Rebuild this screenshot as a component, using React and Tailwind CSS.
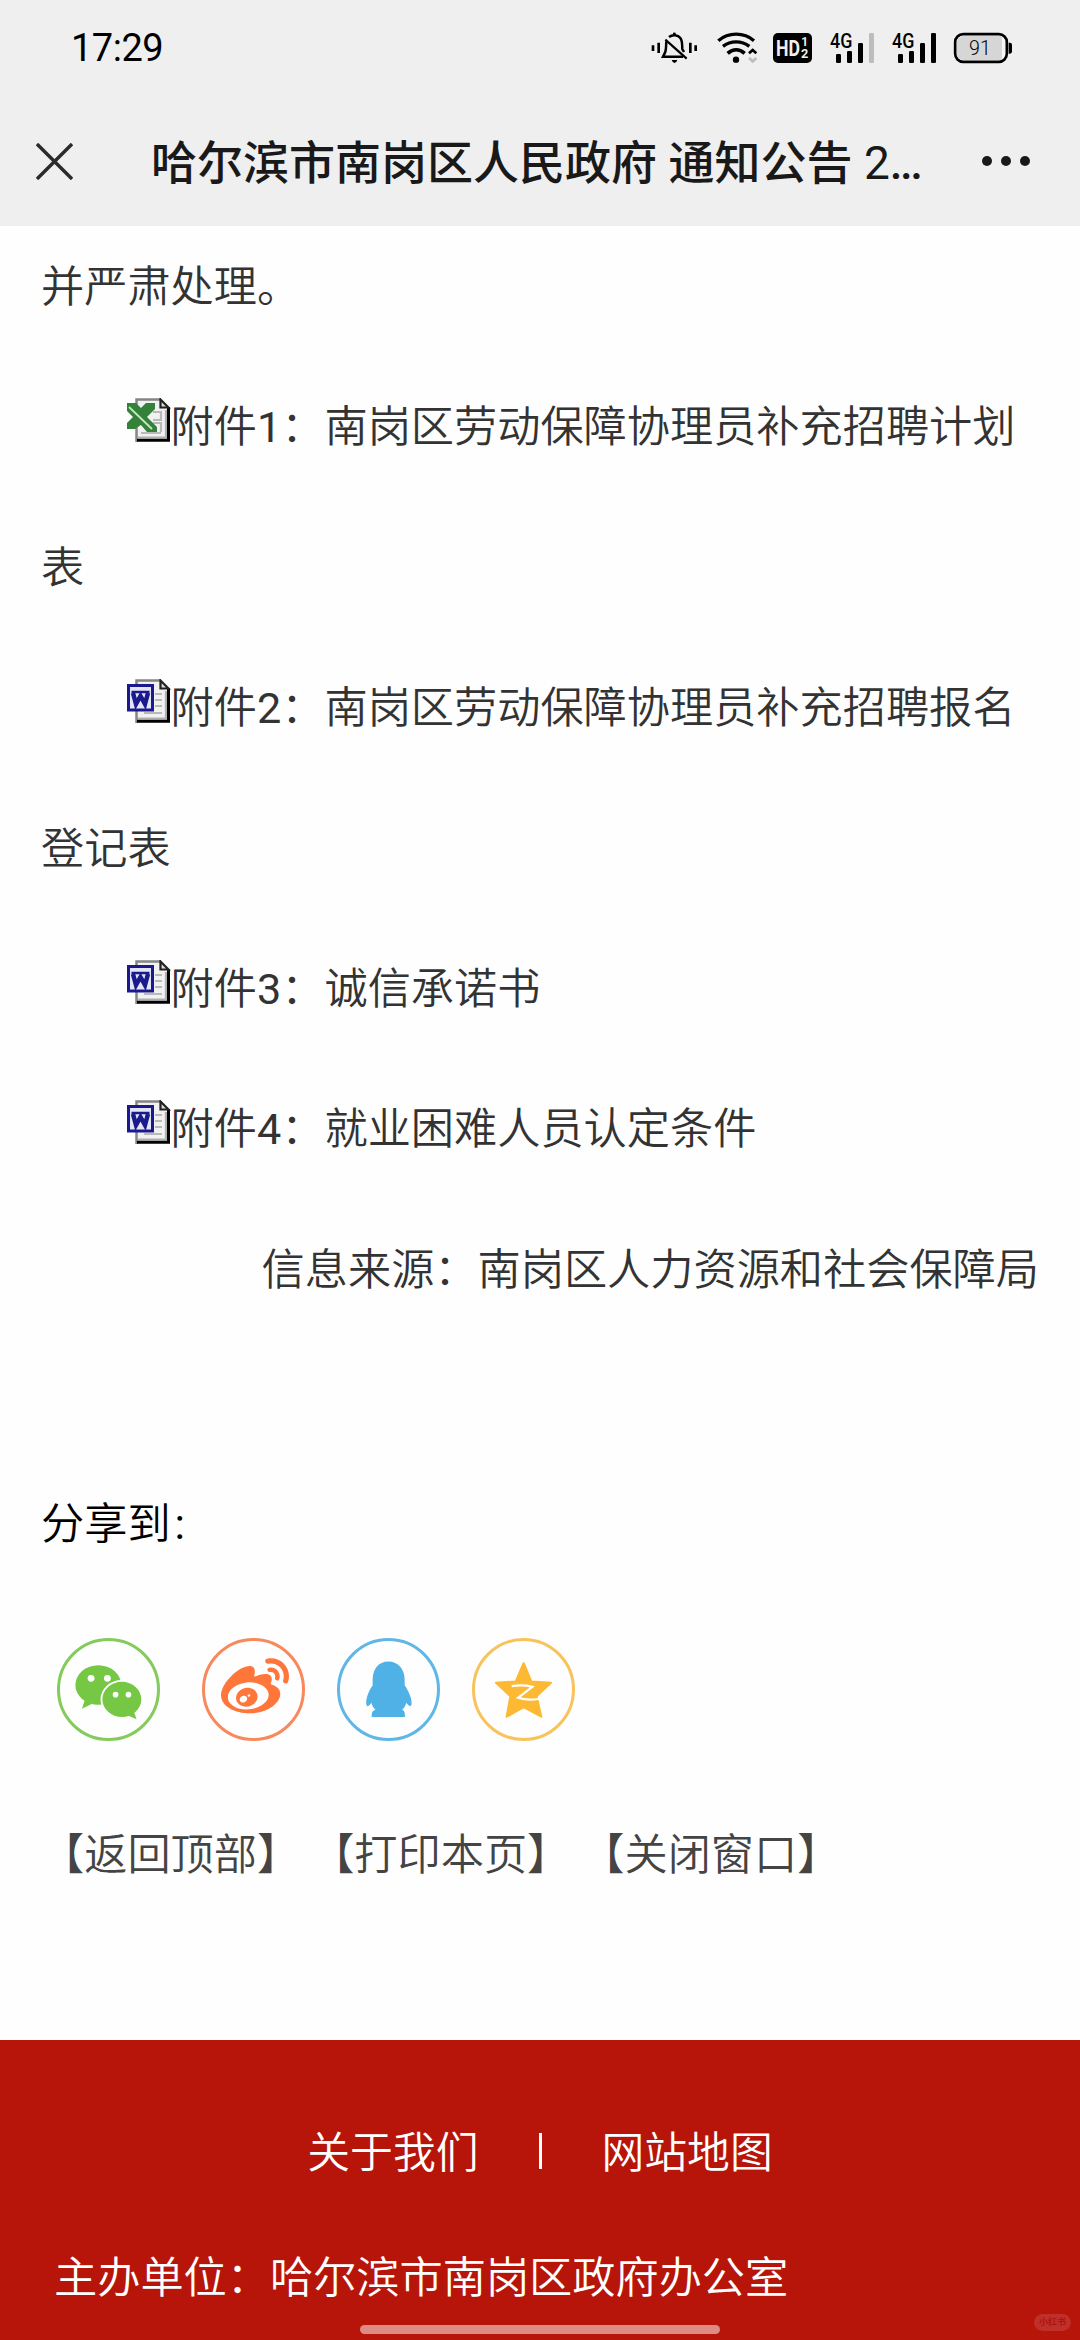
import React from "react";
import { FaWeibo } from "react-icons/fa";

const attachments = [
  { type: "excel", title: "南岗区劳动保障协理员补充招聘计划表" },
  { type: "word", title: "南岗区劳动保障协理员补充招聘报名登记表" },
  { type: "word", title: "诚信承诺书" },
  { type: "word", title: "就业困难人员认定条件" },
];

function MuteIcon() {
  return (
    <svg className="w-[47px] h-8" viewBox="30 96 141 96" fill="none" stroke="#000">
      <path d="M36 136v17M53 128v31M148 128v31M164 136v17" strokeWidth="8" />
      <path d="M84 111c10-8 27-7 34 3 7 9 5 24 6 33l5 9M76 124c-1 12 0 25-4 34l-6 12h60" strokeWidth="7.500" />
      <path d="M73 119l64 57" strokeWidth="6.500" />
      <path d="M100 98v8" strokeWidth="8" />
      <path d="M92 180h17q-3 9-8.500 9t-8.500-9z" fill="#000" stroke="none" />
    </svg>
  );
}

function WifiIcon() {
  return (
    <svg className="w-[41px] h-8" viewBox="228 96 123 96" fill="none" stroke="#000">
      <path d="M232 122c30-26 77-26 107 0" strokeWidth="10" />
      <path d="M246 139c23-18 56-18 79 0" strokeWidth="10" />
      <path d="M260 160c16-14 35-14 51 0" strokeWidth="11" />
      <circle cx="285" cy="179" r="9.500" fill="#000" stroke="none" />
      <path d="M324 160l11-10 11 10" strokeWidth="8" />
      <path d="M324 174l11 10 11-10" stroke="#bdbdbd" strokeWidth="8" />
    </svg>
  );
}

function HdIcon() {
  return (
    <svg className="w-[41px] h-8" viewBox="393 96 123 96" fontFamily="Roboto, sans-serif" fontWeight="700" fill="#efefef">
      <rect x="396" y="99" width="117" height="90" rx="15" fill="#000" />
      <text x="405" y="167" fontSize="64" textLength="72" lengthAdjust="spacingAndGlyphs">HD</text>
      <text x="481" y="139" fontSize="36">1</text>
      <text x="480" y="175" fontSize="38">2</text>
    </svg>
  );
}

function SignalIcon({ weak }) {
  return (
    <svg className="w-[48px] h-10 -mt-2 overflow-visible" viewBox="564 72 144 120">
      <text x="567" y="143" fontSize="58" fontFamily="Roboto, sans-serif" fontWeight="500" textLength="67" lengthAdjust="spacingAndGlyphs">
        4G
      </text>
      <rect x="585" y="162" width="15" height="27" rx="4" />
      <rect x="618" y="153" width="15" height="36" rx="4" />
      <rect x="651" y="129" width="15" height="60" rx="4" />
      <rect x="684" y="99" width="15" height="90" rx="4" fill={weak ? "#bdbdbd" : "#000"} />
    </svg>
  );
}

function BatteryIcon() {
  return (
    <svg className="w-[60px] h-8" viewBox="936 96 180 96">
      <rect x="942.500" y="102.500" width="155" height="83" rx="24" fill="#f6f6f6" stroke="#000" strokeWidth="8" />
      <path d="M968 108h115v72h-115q-20 0-20-20v-32q0-20 20-20z" fill="#d6d6d6" />
      <path d="M1103 128h4q6 0 6 7v19q0 7-6 7h-4z" />
      <text x="984" y="164" fontSize="59" fontFamily="Roboto, sans-serif" fontWeight="300">
        91
      </text>
    </svg>
  );
}

function Sheet() {
  return (
    <>
      <path d="M9 1h24l9 9v33H9z" fill="#f1f1f1" />
      <path d="M9.500 44V1.500H34" fill="none" stroke="#858585" strokeWidth="2.500" />
      <path d="M11 39.500h28V12" fill="none" stroke="#b0b0b0" strokeWidth="2.200" />
      <path d="M10 42.300h31.500V9" fill="none" stroke="#000" strokeWidth="3" />
      <path d="M33.500 1.500l8 8h-8z" fill="#ddd" stroke="#222" strokeWidth="2.200" />
    </>
  );
}

function FileIcon({ type }) {
  return (
    <svg className="inline-block align-baseline w-[43.200px] h-[44px]" viewBox="0 0 43.200 44">
      <Sheet />
      {type === "excel" ? (
        <>
          <path d="M26 14h8v8h-8M26 25h8v9M14 35h20" fill="none" stroke="#b9b9b9" strokeWidth="2.200" />
          <path d="M0 5h9l5 5 5-5h9v6l-8 8 10 10v5h-10l-6-7-6 4H0v-6l6-6-6-6z" fill="#34813a" />
          <path d="M2 9l23 22" stroke="#c5e6c0" strokeWidth="1.800" />
        </>
      ) : (
        <>
          <path d="M28 15h7M28 21h7M28 27h7M17 34h18" stroke="#b9b9b9" strokeWidth="1.800" />
          <rect x="1.500" y="6.500" width="24" height="24.500" fill="#e4e4f6" stroke="#1a1a8c" strokeWidth="3" />
          <path d="M4.500 13h18" stroke="#1a1a8c" strokeWidth="2.500" />
          <path d="M6 14l3 11 4.500-8 4.500 8 3-11" fill="none" stroke="#1a1a8c" strokeWidth="4.500" />
        </>
      )}
    </svg>
  );
}

function WechatIcon() {
  return (
    <svg className="w-full h-full" viewBox="80 475 309 309">
      <path d="M160 660l-10 31 31-15z" fill="#75c744" />
      <ellipse cx="202" cy="615" rx="73" ry="63" fill="#75c744" />
      <ellipse cx="277" cy="661" rx="68" ry="62" fill="#fff" />
      <path d="M297 712l27 12-12-34z" fill="#75c744" />
      <ellipse cx="277" cy="661" rx="62" ry="56" fill="#75c744" />
      <g fill="#fff">
        <circle cx="179" cy="594" r="11" />
        <circle cx="231" cy="594" r="11" />
        <circle cx="257" cy="646" r="9" />
        <circle cx="298" cy="646" r="9" />
      </g>
    </svg>
  );
}

function QqIcon() {
  return (
    <svg className="w-full h-full" viewBox="52 55 309 309" fill="#4fb1e6">
      <path d="M206 120c32 0 52 26 52 58v18c10 14 24 42 22 60-2 12-10 5-17-4-3 11-6 16-13 22 7 3 9 8 9 23H153c0-14 2-20 12-23-7-6-10-12-13-22-6 9-13 16-16 5-3-17 9-46 20-60v-19c0-32 18-58 50-58z" />
    </svg>
  );
}

function QzoneIcon() {
  return (
    <svg className="w-full h-full" viewBox="457 55 309 309">
      <path
        d="M612 126l24 58 63 4-46 43 15 65-56-31-54 31 12-65-46-43 63-4z"
        fill="#fdb933"
        stroke="#fdb933"
        strokeWidth="7"
        strokeLinejoin="round"
      />
      <path d="M574 199q35-6 66 2l-46 35q32 10 68 3" fill="none" stroke="#fff" strokeWidth="7" />
    </svg>
  );
}

function ShareButton({ className, children }) {
  return (
    <button
      className={`flex items-center justify-center size-[103px] shrink-0 rounded-full border-3 *:shrink-0 ${className}`}
    >
      {children}
    </button>
  );
}

function App() {
  return (
    <div className="relative flex flex-col w-[1080px] h-[2340px] overflow-hidden bg-[#fefefe] font-[Roboto,'Noto_Sans_CJK_SC',sans-serif] font-[350] text-[43.200px] text-[#333]">
      <header className="relative z-10 flex flex-col h-[226px] shrink-0 bg-[#efefef]">
        <div className="flex items-start h-[96px] pt-8 pl-[71px] pr-[67px]">
          <span className="mr-auto text-[38px] font-normal leading-8 tracking-[-0.500px] text-black">17:29</span>
          <MuteIcon />
          <div className="w-[19px]" />
          <WifiIcon />
          <div className="w-[14px]" />
          <HdIcon />
          <div className="w-4" />
          <SignalIcon weak />
          <div className="w-[14px]" />
          <SignalIcon />
          <div className="w-[14px]" />
          <BatteryIcon />
        </div>
        <div className="flex items-center h-[130px] pl-9 pr-[49px]">
          <svg className="size-[37px]" viewBox="0 0 38 38" stroke="#2b2b2b" strokeWidth="3.500">
            <path d="M1 1l36 36M37 1L1 37" />
          </svg>
          <h1 className="ml-[78px] mr-auto pt-[4px] whitespace-nowrap text-[46px] font-medium text-[#191919]">
            哈尔滨市南岗区人民政府 通知公告 <span className="font-normal">2</span>
            <span className="tracking-[-2.500px]">...</span>
          </h1>
          <svg className="w-[50px] h-[10px]" viewBox="0 0 50 10" fill="#191919">
            <circle cx="6" cy="5" r="5" />
            <circle cx="25" cy="5" r="5" />
            <circle cx="44" cy="5" r="5" />
          </svg>
        </div>
      </header>

      <main className="-mt-[8px] px-[41px] leading-[140.400px]">
        <p>并严肃处理。</p>
        {attachments.map((item, i) => (
          <p key={item.title} className="indent-[86.400px]">
            <FileIcon type={item.type} />
            附件<span className="font-normal">{i + 1}</span>：{item.title}
          </p>
        ))}
        <p className="text-right">信息来源：南岗区人力资源和社会保障局</p>
      </main>

      <section className="mt-[114px] px-[41px]">
        <p className="leading-[140px] text-black">
          分享到<span className="ml-[4px] font-normal">:</span>
        </p>
        <div className="flex mt-[43px] pl-4">
          <ShareButton className="border-[#84cb5c]">
            <WechatIcon />
          </ShareButton>
          <ShareButton className="ml-[42px] border-[#f8895c]">
            <FaWeibo className="w-[68px] h-[68px] ml-[2px] -mt-1 text-[#ff763b]" />
          </ShareButton>
          <ShareButton className="ml-8 border-[#60b7e6]">
            <QqIcon />
          </ShareButton>
          <ShareButton className="ml-8 border-[#f9c35c]">
            <QzoneIcon />
          </ShareButton>
        </div>
        <nav className="flex gap-[11px] mt-[45px] leading-[140px] whitespace-nowrap text-[#444]">
          <a>【返回顶部】</a>
          <a>【打印本页】</a>
          <a>【关闭窗口】</a>
        </nav>
      </section>

      <footer className="mt-auto h-[300px] shrink-0 bg-[#b71509] text-white">
        <div className="flex items-center justify-center gap-[60px] h-[126px] mt-[50px] text-[42.800px]">
          <a>关于我们</a>
          <span className="w-[3px] h-9 -mt-1 bg-white" />
          <a>网站地图</a>
        </div>
        <p className="pl-[54px] leading-[126px]">主办单位：哈尔滨市南岗区政府办公室</p>
      </footer>

      <div className="absolute left-[360px] top-[2325px] w-[360px] h-[9px] rounded-full bg-[#dd8b85]" />
      <div className="absolute left-[1034px] top-[2314px] flex items-center justify-center w-[37px] h-[17px] rounded-full bg-[#c0302a] text-[9px] font-bold text-[#ad1510]">
        小红书
      </div>
    </div>
  );
}

export default App;
